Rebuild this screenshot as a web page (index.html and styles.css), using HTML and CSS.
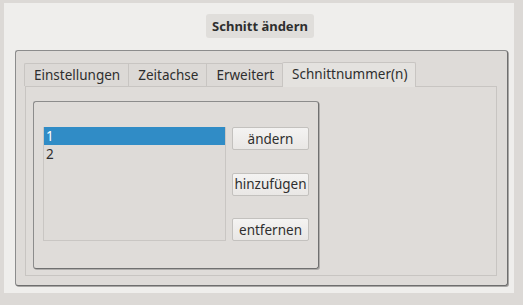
FILE: index.html
```html
<!DOCTYPE html>
<html>
<head>
  <title>Schnitt ändern</title>
  <link rel="stylesheet" href="styles.css">
</head>
<body>
  <div class="dialog">
    <div class="title-row">
      <div class="title">Schnitt ändern</div>
    </div>
    <div class="frame">
      <div class="tabs">
        <div class="tab">Einstellungen</div>
        <div class="tab">Zeitachse</div>
        <div class="tab">Erweitert</div>
        <div class="tab active">Schnittnummer(n)</div>
      </div>
      <div class="pane">
        <div class="group">
          <div class="list">
            <div class="item selected">1</div>
            <div class="item">2</div>
          </div>
          <div class="buttons">
            <button class="btn">ändern</button>
            <button class="btn">hinzufügen</button>
            <button class="btn">entfernen</button>
          </div>
        </div>
      </div>
    </div>
  </div>
</body>
</html>
```

FILE: styles.css
```css
* {
  box-sizing: border-box;
}
body {
  margin: 0;
  background-color: #dcd9d6;
  font-family: "Noto Sans", sans-serif;
  font-size: 13.5px;
  color: #2e2e2e;
}

.dialog {
  margin: 3px 0 0 4px;
  width: 510px;
  height: 290px;
  background-color: #efeeec;
  padding-top: 10px;
}

.title-row {
  display: flex;
  justify-content: center;
  margin-left: 2px;
}
.title {
  background-color: #e0dedb;
  border-radius: 3px;
  font-weight: bold;
  font-size: 13px;
  padding: 0 6px;
  height: 24px;
  line-height: 24px;
  margin-top: 1px;
}

.frame {
  margin: 12px 0 0 11px;
  width: 493px;
  height: 236px;
  background-color: #dedbd8;
  border: 1px solid #8c8c8c;
  border-right-color: #6e6e6e;
  border-bottom-color: #6e6e6e;
  border-radius: 3px;
  box-shadow: 1px 1px 0 #a8a6a4;
  padding: 11px 0 0 8px;
}

.tabs {
  display: flex;
  height: 24px;
  align-items: flex-end;
}
.tab {
  height: 23px;
  line-height: 22px;
  padding: 0 8px 0 9px;
  background-color: #dcd9d6;
  border: 1px solid #c8c5c2;
  border-bottom: none;
  border-right: none;
}
.tab:first-child {
  border-radius: 2px 0 0 0;
}
.tab.active {
  height: 25px;
  background-color: #e4e2df;
  border-right: 1px solid #c8c5c2;
  border-radius: 2px 2px 0 0;
  position: relative;
  top: 1px;
  margin-top: -2px;
}

.pane {
  margin-left: 1px;
  width: 472px;
  height: 190px;
  border: 1px solid #c8c5c2;
  background-color: #dfdcd9;
  padding: 14px 0 0 7px;
}

.group {
  width: 286px;
  height: 168px;
  border: 1px solid #8c8c8c;
  border-right-color: #707070;
  border-bottom-color: #707070;
  border-radius: 3px;
  box-shadow: 1px 1px 0 #b0aeac;
  display: flex;
  padding: 25px 0 0 9px;
  gap: 6px;
}

.list {
  width: 183px;
  height: 114px;
  border: 1px solid #c9c6c3;
  border-top: none;
  background-color: #dedbd8;
}
.item {
  height: 18px;
  line-height: 18px;
  padding-left: 2px;
  font-size: 13.5px;
}
.item.selected {
  background-color: #308cc6;
  color: #ffffff;
}

.buttons {
  display: flex;
  flex-direction: column;
  justify-content: space-between;
  height: 114px;
}
.btn {
  width: 77px;
  height: 23px;
  font-family: "Noto Sans", sans-serif;
  font-size: 13.5px;
  color: #2e2e2e;
  padding: 0;
  border: 1px solid #c3c1be;
  border-radius: 2px;
  background: linear-gradient(#f4f3f2, #e9e7e5);
}
```
